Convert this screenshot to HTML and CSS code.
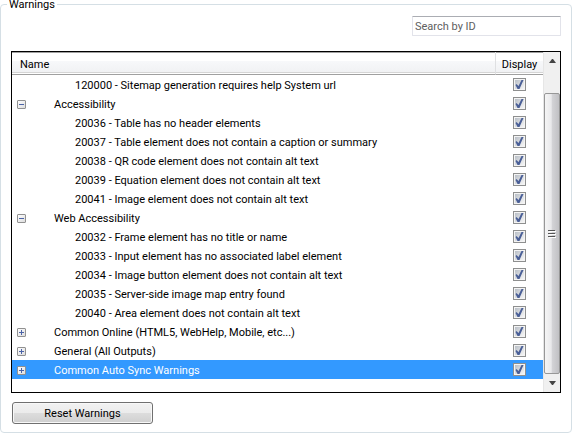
FILE: index.html
```html
<!DOCTYPE html>
<html lang="en">
<head>
<meta charset="utf-8">
<title>Warnings</title>
<link rel="stylesheet" href="styles.css">
</head>
<body>
<fieldset class="group">
  <legend>Warnings</legend>
  <div class="toolbar"><input class="search" type="text" placeholder="Search by ID" aria-label="Search by ID"></div>
  <div class="list">
    <table class="tree">
      <thead><tr><th class="name">Name</th><th class="display">Display</th></tr></thead>
      <tbody>
        <tr><td class="item"><label for="w1">120000 - Sitemap generation requires help System url</label></td><td class="display"><input type="checkbox" id="w1" checked></td></tr>
        <tr><td class="category"><button class="toggle" type="button" aria-label="Collapse"></button><label for="w2">Accessibility</label></td><td class="display"><input type="checkbox" id="w2" checked></td></tr>
        <tr><td class="item"><label for="w3">20036 - Table has no header elements</label></td><td class="display"><input type="checkbox" id="w3" checked></td></tr>
        <tr><td class="item"><label for="w4">20037 - Table element does not contain a caption or summary</label></td><td class="display"><input type="checkbox" id="w4" checked></td></tr>
        <tr><td class="item"><label for="w5">20038 - QR code element does not contain alt text</label></td><td class="display"><input type="checkbox" id="w5" checked></td></tr>
        <tr><td class="item"><label for="w6">20039 - Equation element does not contain alt text</label></td><td class="display"><input type="checkbox" id="w6" checked></td></tr>
        <tr><td class="item"><label for="w7">20041 - Image element does not contain alt text</label></td><td class="display"><input type="checkbox" id="w7" checked></td></tr>
        <tr><td class="category"><button class="toggle" type="button" aria-label="Collapse"></button><label for="w8">Web Accessibility</label></td><td class="display"><input type="checkbox" id="w8" checked></td></tr>
        <tr><td class="item"><label for="w9">20032 - Frame element has no title or name</label></td><td class="display"><input type="checkbox" id="w9" checked></td></tr>
        <tr><td class="item"><label for="w10">20033 - Input element has no associated label element</label></td><td class="display"><input type="checkbox" id="w10" checked></td></tr>
        <tr><td class="item"><label for="w11">20034 - Image button element does not contain alt text</label></td><td class="display"><input type="checkbox" id="w11" checked></td></tr>
        <tr><td class="item"><label for="w12">20035 - Server-side image map entry found</label></td><td class="display"><input type="checkbox" id="w12" checked></td></tr>
        <tr><td class="item"><label for="w13">20040 - Area element does not contain alt text</label></td><td class="display"><input type="checkbox" id="w13" checked></td></tr>
        <tr><td class="category"><button class="toggle closed" type="button" aria-label="Expand"></button><label for="w14">Common Online (HTML5, WebHelp, Mobile, etc...)</label></td><td class="display"><input type="checkbox" id="w14" checked></td></tr>
        <tr><td class="category"><button class="toggle closed" type="button" aria-label="Expand"></button><label for="w15">General (All Outputs)</label></td><td class="display"><input type="checkbox" id="w15" checked></td></tr>
        <tr class="selected"><td class="category"><button class="toggle closed" type="button" aria-label="Expand"></button><label for="w16">Common Auto Sync Warnings</label></td><td class="display"><input type="checkbox" id="w16" checked></td></tr>
      </tbody>
    </table>
    <div class="scrollbar">
      <button class="arrow" type="button" aria-label="Scroll up"><svg width="7" height="4" viewBox="0 0 7 4"><path d="M0 4 3 0h1l3 4z" fill="#444"/></svg></button>
      <div class="thumb"><svg width="8" height="8" viewBox="0 0 8 8"><path d="M0 0h7v1H0zM0 3h7v1H0zM0 6h7v1H0z" fill="#555"/><path d="M1 1h7v1H1zM1 4h7v1H1zM1 7h7v1H1z" fill="#fff"/></svg></div>
      <button class="arrow" type="button" aria-label="Scroll down"><svg width="7" height="4" viewBox="0 0 7 4"><path d="M0 0h7L4 4H3z" fill="#444"/></svg></button>
    </div>
  </div>
  <button class="reset" type="button">Reset Warnings</button>
</fieldset>
</body>
</html>
```
FILE: styles.css
```css
* {
  box-sizing: border-box;
}

body {
  margin: 0;
  background: #fff;
}

body,
input,
button {
  font: 11px/14px Tahoma, Roboto, sans-serif;
  color: #000;
}

.group {
  margin: 0 1px 0 0;
  padding: 7px 10px 8px;
  border: 1px solid #d5dfe5;
  border-radius: 4px;
}

legend {
  margin-left: -4px;
  padding: 0 2px;
  line-height: 9px;
}

.toolbar {
  display: flex;
  justify-content: flex-end;
  margin-bottom: 15px;
}

.search {
  width: 149px;
  height: 20px;
  padding: 0 2px;
  border: 1px solid #e2e3ea;
  border-top-color: #abadb3;
  border-radius: 1px;
}

.search::placeholder {
  color: #606060;
  opacity: 1;
}

.list {
  display: flex;
  border: 1px solid #000;
}

.tree {
  flex: 1;
  border-collapse: separate;
  border-spacing: 0;
  margin-bottom: 13px;
}

th {
  height: 23px;
  padding: 4px 8px 0;
  border-bottom: 1px solid #a0a0a0;
  background: linear-gradient(#a0a0a0 1px, #fff 1px, #fff 9px, #f7f8fa 9px, #f1f2f4 20px, #d5d5d5 20px, #d5d5d5 21px, #fff 21px);
  font-weight: normal;
  text-align: left;
}

th.display {
  border-left: 1px solid #dfe0e2;
}

td {
  height: 19px;
  padding: 0;
}

.display {
  width: 48px;
  padding-left: 0;
  padding-right: 0;
  text-align: center;
}

.item {
  padding: 2px 0 0 63px;
}

.category {
  padding: 2px 0 0 5px;
}

.toggle {
  width: 9px;
  height: 9px;
  margin: 0 28px 0 0;
  padding: 0;
  border: 1px solid #919191;
  border-radius: 1px;
  background:
    linear-gradient(#4b63a7, #4b63a7) center / 5px 1px no-repeat,
    linear-gradient(135deg, #fff, #dcdcdc);
}

.closed {
  background:
    linear-gradient(#4b63a7, #4b63a7) center / 5px 1px no-repeat,
    linear-gradient(#4b63a7, #4b63a7) center / 1px 5px no-repeat,
    linear-gradient(135deg, #fff, #dcdcdc);
}

.selected td {
  background: #39f;
  color: #fff;
}

input[type="checkbox"] {
  appearance: none;
  display: block;
  width: 13px;
  height: 13px;
  margin: 0 auto;
  padding: 1px;
  border: 1px solid #8e8f8f;
  background: linear-gradient(135deg, #b9bfc7, #f6f6f6) content-box, #f4f4f4;
}

input[type="checkbox"]:checked::before {
  content: "";
  display: block;
  height: 9px;
  background: #4a5f97;
  clip-path: polygon(1px 5px, 2px 4px, 4px 6px, 7px 0, 9px 0, 5px 9px, 3px 9px);
}

.scrollbar {
  display: flex;
  flex-direction: column;
  width: 17px;
  border-left: 1px solid #e6e6e6;
  background: #f0f0f0;
}

.arrow {
  display: grid;
  place-items: center;
  height: 18px;
  padding: 0;
  border: 0;
  background: none;
}

.thumb {
  display: grid;
  place-items: center;
  flex: 1;
  margin-top: 23px;
  border: 1px solid #979797;
  border-radius: 2px;
  background: linear-gradient(90deg, #f5f5f5, #e9e9eb 45%, #d4d4d7 50%, #c1c1c4);
}

.reset {
  display: block;
  width: 141px;
  height: 22px;
  margin: 9px 0 0 1px;
  padding: 2px 0 0;
  border: 1px solid #707070;
  border-radius: 3px;
  background: linear-gradient(#f2f2f2, #ebebeb 50%, #ddd 50%, #cfcfcf);
  box-shadow: inset 0 0 0 1px #f8f8f8;
}
```
